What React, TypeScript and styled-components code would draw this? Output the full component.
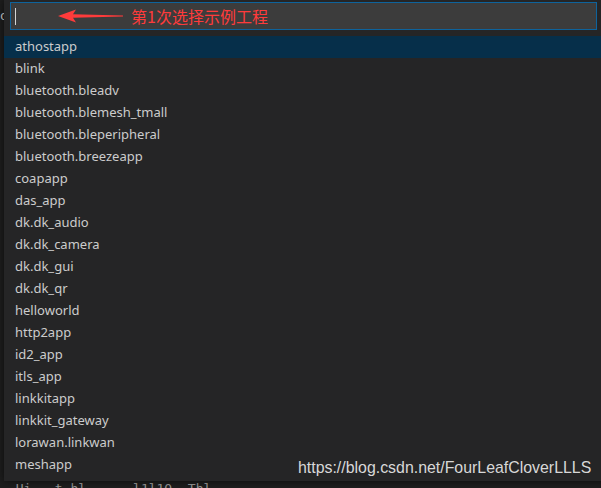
import React from "react";
import styled, { createGlobalStyle } from "styled-components";

const Global = createGlobalStyle`
  html, body { margin: 0; padding: 0; background: #1e1e1e; overflow: hidden; }
  #root { width: 601px; height: 488px; }
`;

const Screen = styled.div`
  position: relative;
  width: 601px;
  height: 488px;
  background: #1e1e1e;
  overflow: hidden;
  font-family: "Noto Sans", "Open Sans", sans-serif;
`;

const EditorLine = styled.div<{ $top: number; $color: string }>`
  position: absolute;
  left: 0;
  top: ${(p) => p.$top}px;
  font-family: "DejaVu Sans Mono", monospace;
  font-size: 13px;
  line-height: 16px;
  color: ${(p) => p.$color};
  white-space: pre;
`;

const QuickPick = styled.div`
  position: absolute;
  left: 4px;
  top: 0;
  right: -20px;
  height: 481px;
  background: #252526;
  box-shadow: 0 0 8px rgba(0, 0, 0, 0.6);
  display: flex;
  flex-direction: column;
`;

const InputRow = styled.div`
  padding: 2px 24px 0 6px;
  height: 36px;
  box-sizing: border-box;
`;

const InputBox = styled.div`
  position: relative;
  height: 28px;
  box-sizing: border-box;
  background: #3c3c3c;
  border: 1px solid #0e639c;
  display: flex;
  align-items: center;
  padding-left: 4px;
`;

const Caret = styled.span`
  width: 1px;
  height: 17px;
  background: #d4d4d4;
`;

const Annotation = styled.div`
  position: absolute;
  left: 47px;
  top: 3px;
  display: flex;
  align-items: center;
  gap: 8px;
  color: #ff3b3b;
  font-family: "Noto Sans CJK SC", sans-serif;
  font-size: 16px;
  line-height: 20px;
`;

const List = styled.div`
  display: flex;
  flex-direction: column;
  margin-top: -0.5px;
`;

const Row = styled.div<{ $selected?: boolean }>`
  height: 22px;
  line-height: 21px;
  padding-left: 11px;
  font-size: 13px;
  color: #cccccc;
  background: ${(p) => (p.$selected ? "#062f4a" : "transparent")};
  white-space: nowrap;
`;

const Watermark = styled.div`
  position: absolute;
  left: 298px;
  top: 459px;
  font-family: "Liberation Sans", Arial, sans-serif;
  font-size: 15.9px;
  line-height: 18px;
  color: #d8d8d8;
  white-space: nowrap;
`;

const items = [
  "athostapp",
  "blink",
  "bluetooth.bleadv",
  "bluetooth.blemesh_tmall",
  "bluetooth.bleperipheral",
  "bluetooth.breezeapp",
  "coapapp",
  "das_app",
  "dk.dk_audio",
  "dk.dk_camera",
  "dk.dk_gui",
  "dk.dk_qr",
  "helloworld",
  "http2app",
  "id2_app",
  "itls_app",
  "linkkitapp",
  "linkkit_gateway",
  "lorawan.linkwan",
  "meshapp",
];

const Arrow = () => (
  <svg width="65" height="14" viewBox="0 0 65 14">
    <path d="M0 7 L18 0.5 L15 5.2 L65 6.4 L65 7.6 L15 8.8 L18 13.5 Z" fill="#ff3b3b" />
  </svg>
);

export default function App() {
  return (
    <Screen>
      <Global />
      <EditorLine $top={8} $color="#d4d4d4">o</EditorLine>
      <EditorLine $top={481} $color="#9a9a9a">{"  Hi   t hl      l1l1O  Thl    "}</EditorLine>
      <QuickPick>
        <InputRow>
          <InputBox>
            <Caret />
            <Annotation>
              <Arrow />
              <span>第1次选择示例工程</span>
            </Annotation>
          </InputBox>
        </InputRow>
        <List>
          {items.map((it, i) => (
            <Row key={it} $selected={i === 0}>
              {it}
            </Row>
          ))}
        </List>
      </QuickPick>
      <Watermark>https://blog.csdn.net/FourLeafCloverLLLS</Watermark>
    </Screen>
  );
}
